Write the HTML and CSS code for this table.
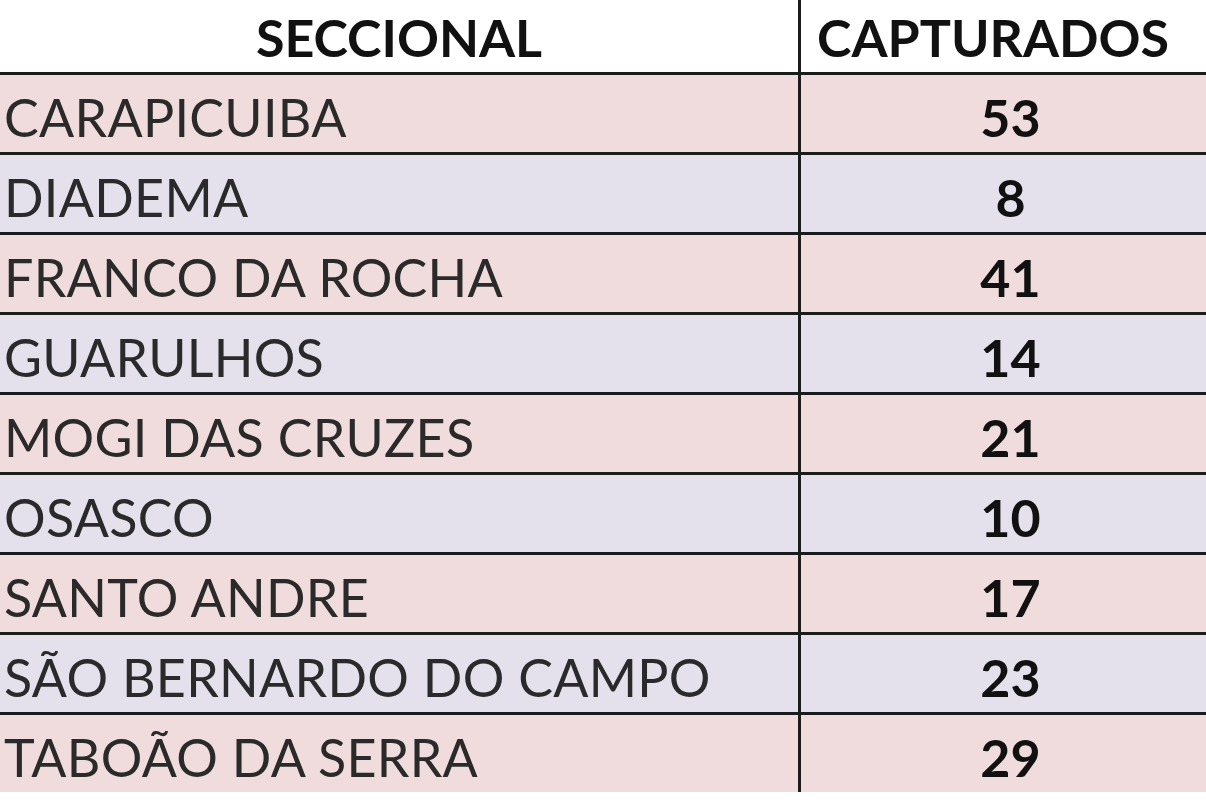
FILE: index.html
```html
<!DOCTYPE html>
<html lang="pt-BR">
<head>
<meta charset="utf-8">
<title>Capturados por Seccional</title>
<link rel="stylesheet" href="styles.css">
</head>
<body>
<div class="sheet">
  <div class="cell head name">SECCIONAL</div>
  <div class="cell head num">CAPTURADOS</div>

  <div class="cell name pink">CARAPICUIBA</div>
  <div class="cell num pink">53</div>

  <div class="cell name lav">DIADEMA</div>
  <div class="cell num lav">8</div>

  <div class="cell name pink">FRANCO DA ROCHA</div>
  <div class="cell num pink">41</div>

  <div class="cell name lav">GUARULHOS</div>
  <div class="cell num lav">14</div>

  <div class="cell name pink">MOGI DAS CRUZES</div>
  <div class="cell num pink">21</div>

  <div class="cell name lav">OSASCO</div>
  <div class="cell num lav">10</div>

  <div class="cell name pink">SANTO ANDRE</div>
  <div class="cell num pink">17</div>

  <div class="cell name lav">SÃO BERNARDO DO CAMPO</div>
  <div class="cell num lav">23</div>

  <div class="cell name pink">TABOÃO DA SERRA</div>
  <div class="cell num pink">29</div>
</div>
</body>
</html>
```

FILE: styles.css
```css
html, body {
  margin: 0;
  padding: 0;
  background: #ffffff;
}

.sheet {
  display: grid;
  grid-template-columns: 801px 1fr;
  grid-template-rows: 72px repeat(9, 80px);
  width: 1206px;
  font-family: Lato, "Liberation Sans", sans-serif;
}

.cell {
  display: flex;
  align-items: center;
  box-sizing: border-box;
  border-top: 3px solid #1c1c1c;
  font-size: 52px;
  color: #2a2a2a;
  padding-top: 6px;
  white-space: nowrap;
  overflow: hidden;
}

.cell.name {
  border-right: 3px solid #1c1c1c;
  padding-left: 4px;
  letter-spacing: 0.3px;
}

.cell.num {
  justify-content: center;
  font-weight: 700;
  color: #111111;
  padding-left: 14px;
}

.cell.head {
  border-top: none;
  background: #ffffff;
  font-weight: 700;
  color: #111111;
  padding-top: 2px;
  font-size: 52px;
  letter-spacing: 0;
}

.cell.head.name {
  justify-content: center;
  padding-left: 0;
}

.cell.head.num {
  justify-content: flex-start;
  padding-left: 16px;
}

.pink {
  background: #f0dcdc;
}

.lav {
  background: #e4e0ec;
}
```
